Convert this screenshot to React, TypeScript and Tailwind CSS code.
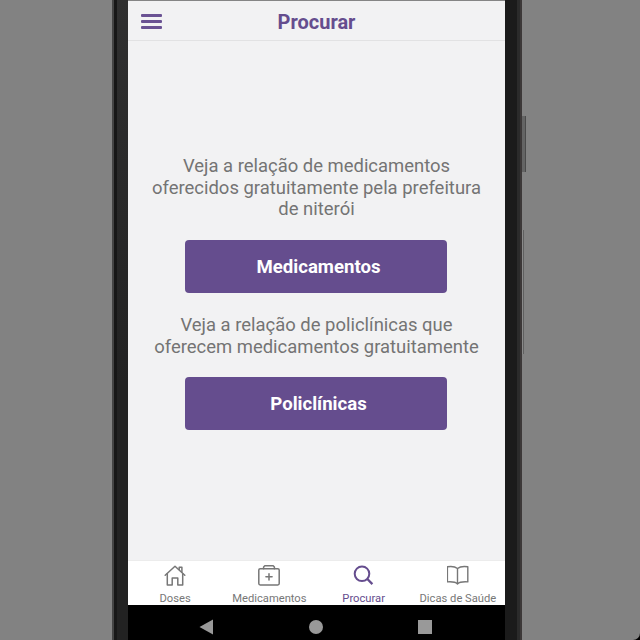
import React from "react";

function Line({ children }: { children: React.ReactNode }) {
  return <span className="block whitespace-nowrap">{children}</span>;
}

function HomeIcon() {
  return (
    <svg className="h-[22px] w-[22px] shrink-0" viewBox="0 0 22 22" fill="none" stroke="#777" strokeWidth="1.5" strokeLinejoin="round" strokeLinecap="round">
      <path d="M1.2 10.3 11 1.2l9.8 9.1" />
      <path d="M3.3 8.7V20h4.9v-7.1h5.6V20h4.9V8.7" />
      <path d="M15.2 4.5V2.2h2.7v5" />
    </svg>
  );
}

function KitIcon() {
  return (
    <svg className="h-[22px] w-[22px] shrink-0" viewBox="0 0 22 22" fill="none" stroke="#777" strokeWidth="1.5" strokeLinejoin="round" strokeLinecap="round">
      <rect x="0.8" y="3.7" width="20.4" height="16.2" rx="1.4" />
      <path d="M5.6 3.7V2.1L6.8.8h8.4l1.2 1.3v1.6" />
      <path d="M11 8.7v6.2M7.9 11.8h6.2" />
    </svg>
  );
}

function SearchIcon() {
  return (
    <svg className="h-[22px] w-[22px] shrink-0" viewBox="0 0 22 22" fill="none" stroke="#654d8e" strokeWidth="2">
      <circle cx="9" cy="8.8" r="7.3" />
      <path d="m14.1 13.8 5.3 5.3" strokeWidth="2.3" />
    </svg>
  );
}

function BookIcon() {
  return (
    <svg className="h-[22px] w-[22px] shrink-0" viewBox="0 0 22 22" fill="none" stroke="#777" strokeWidth="1.4" strokeLinejoin="round">
      <path d="M10.500 3.500C8.100 1.500 4.400 1.200.4 1.800v15.100c4.200-.3 8-.1 10.100 2 2.100-2.100 5.900-2.300 10.300-2V1.800C16.600 1.200 12.900 1.500 10.500 3.500Z" />
      <path d="M10.500 3.500v15.400" />
    </svg>
  );
}

function Tab({ icon, label, className }: { icon: React.ReactNode; label: string; className: string }) {
  return (
    <div className={`flex w-[94.250px] shrink-0 flex-col items-center pt-1 ${className}`}>
      {icon}
      <span className="mt-[5px] text-[11.200px] leading-[14px] whitespace-nowrap">{label}</span>
    </div>
  );
}

function ActionButton({ label }: { label: string }) {
  return (
    <button className="mr-[1px] h-[53px] w-[262px] shrink-0 rounded-[4px] bg-[#654d8e] pt-[4px] pl-[5px] text-[18.600px] font-bold text-white">
      {label}
    </button>
  );
}

export default function App() {
  return (
    <div className="h-[640px] w-[640px] overflow-hidden bg-black font-['Roboto','Liberation_Sans',sans-serif]">
      <div className="flex h-full w-full rounded-br-[7px] bg-[#828282]">
        <div className="w-[112px] shrink-0" />
        <div className="flex shrink-0">
          <div className="w-[2px] bg-[#454545]" />
          <div className="w-[3px] bg-[#171717]" />
          <div className="w-[11px] bg-[linear-gradient(#303030,#222_60%)]" />
        </div>
        <div className="flex w-[377px] shrink-0 flex-col border-t border-[#858585] bg-[#f2f2f3]">
          <header className="flex h-10 shrink-0 items-center border-b border-[#e2e2e3]">
            <div className="mt-px ml-[13px] flex w-[21px] flex-col gap-[3px]">
              <div className="h-[3px] rounded-[1px] bg-[#6a5293]" />
              <div className="h-[3px] rounded-[1px] bg-[#6a5293]" />
              <div className="h-[3px] rounded-[1px] bg-[#6a5293]" />
            </div>
            <h1 className="mt-[2px] mr-[34px] flex-1 text-center text-[20px] leading-6 font-bold text-[#654d8e]">Procurar</h1>
          </header>
          <main className="flex flex-1 flex-col items-center pt-[115px]">
            <p className="mb-[19px] text-center text-[18.450px] leading-[21.500px] text-[#747474]">
              <Line>Veja a relação de medicamentos</Line>
              <Line>oferecidos gratuitamente pela prefeitura</Line>
              <Line>de niterói</Line>
            </p>
            <ActionButton label="Medicamentos" />
            <p className="mt-[21px] mb-[19px] text-center text-[18.450px] leading-[22px] text-[#747474]">
              <Line>Veja a relação de policlínicas que</Line>
              <Line>oferecem medicamentos gratuitamente</Line>
            </p>
            <ActionButton label="Policlínicas" />
          </main>
          <nav className="flex h-[45px] shrink-0 border-t border-[#ececec] bg-white">
            <Tab icon={<HomeIcon />} label="Doses" className="text-[#777]" />
            <Tab icon={<KitIcon />} label="Medicamentos" className="text-[#777]" />
            <Tab icon={<SearchIcon />} label="Procurar" className="text-[#654d8e]" />
            <Tab icon={<BookIcon />} label="Dicas de Saúde" className="text-[#777]" />
          </nav>
          <div className="flex h-[35px] shrink-0 items-center bg-black pt-[9px]">
            <svg className="ml-[71px] h-4 w-4" viewBox="0 0 16 16" fill="#999"><path d="M.5 8 14 .5v15Z" /></svg>
            <div className="ml-[94px] h-[14px] w-[14px] rounded-full bg-[#999]" />
            <div className="ml-[95px] h-[14px] w-[14px] bg-[#999]" />
          </div>
        </div>
        <div className="flex shrink-0">
          <div className="w-[12px] bg-[#1b1b1b]" />
          <div className="w-[3px] bg-[#2b2b2b]" />
          <div className="w-[2px] bg-[#3c3838]" />
        </div>
        <div className="flex flex-col">
          <div className="mt-[116px] h-[56px] w-[4px] border-r border-[#4a4a4a] bg-[#646464]" />
          <div className="mt-[58px] h-[124px] w-[2px] border-r border-[#606060] bg-[#8a8a8a]" />
        </div>
      </div>
    </div>
  );
}
